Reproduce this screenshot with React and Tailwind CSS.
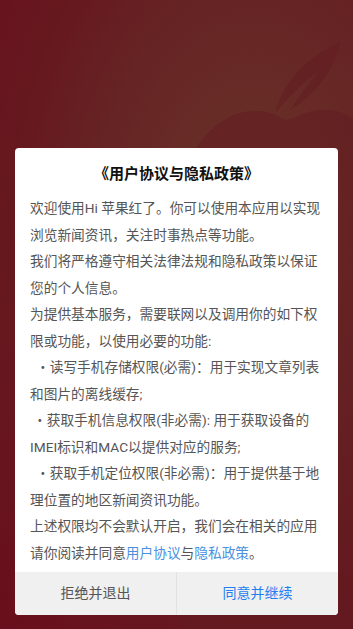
export default function App() {
  const paragraphs = [
    '欢迎使用Hi 苹果红了。你可以使用本应用以实现浏览新闻资讯，关注时事热点等功能。',
    '我们将严格遵守相关法律法规和隐私政策以保证您的个人信息。',
    '为提供基本服务，需要联网以及调用你的如下权限或功能，以使用必要的功能:',
  ];
  const perms = [
    { indent: 'indent-[6px]', text: '・读写手机存储权限(必需)：用于实现文章列表和图片的离线缓存;' },
    { indent: 'indent-[3px]', text: '・获取手机信息权限(非必需): 用于获取设备的IMEI标识和MAC以提供对应的服务;' },
    { indent: 'indent-[6px]', text: '・获取手机定位权限(非必需)：用于提供基于地理位置的地区新闻资讯功能。' },
  ];

  return (
    <div
      className="relative h-[629px] w-full overflow-hidden bg-[radial-gradient(ellipse_at_72%_38%,#6a3127_0%,#682c27_25%,#662424_45%,#66181f_68%,#690e1c_100%)] pt-[148px] px-[15px]"
      style={{ fontFamily: 'Roboto, "Noto Sans CJK SC", sans-serif' }}
    >
      {/* faint apple in the background */}
      <svg className="absolute left-0 top-0" width="353" height="629" viewBox="0 0 353 629">
        <path
          d="M195 150 C 215 118, 245 105, 270 113 C 280 116, 282 120, 287 120 C 295 118, 310 108, 330 110 C 345 112, 353 118, 360 125 L 360 629 L 180 629 Z"
          fill="#611a20"
          opacity="0.5"
        />
        <path
          d="M276 112 C 280 90, 300 60, 340 42 C 335 70, 315 95, 290 110 C 300 95, 310 82, 318 72 C 303 82, 288 98, 276 112 Z"
          fill="#611a20"
          opacity="0.5"
        />
      </svg>

      <div className="relative flex flex-col overflow-hidden rounded-[4px] bg-white">
        <h1 className="pt-[14px] pb-[9px] text-center text-[15px] font-bold leading-[24px] text-[#111]">
          《用户协议与隐私政策》
        </h1>

        <div className="px-[15px] pb-[6px] text-[13.7px] leading-[26.5px] text-[#555]">
          {paragraphs.map(p => (
            <p key={p}>{p}</p>
          ))}
          {perms.map(p => (
            <p key={p.text} className={p.indent}>{p.text}</p>
          ))}
          <p>上述权限均不会默认开启，我们会在相关的应用</p>
          <p>
            请你阅读并同意<span className="text-[#4a8fe0]">用户协议</span>与
            <span className="text-[#4a8fe0]">隐私政策</span>。
          </p>
        </div>

        <div className="flex h-[43px] bg-[#f0f0f0]">
          <button className="flex-1 border-r border-[#e2e2e2] text-[14px] text-[#555]">
            拒绝并退出
          </button>
          <button className="flex-1 text-[14px] text-[#1f7ff0]">
            同意并继续
          </button>
        </div>
      </div>
    </div>
  );
}
